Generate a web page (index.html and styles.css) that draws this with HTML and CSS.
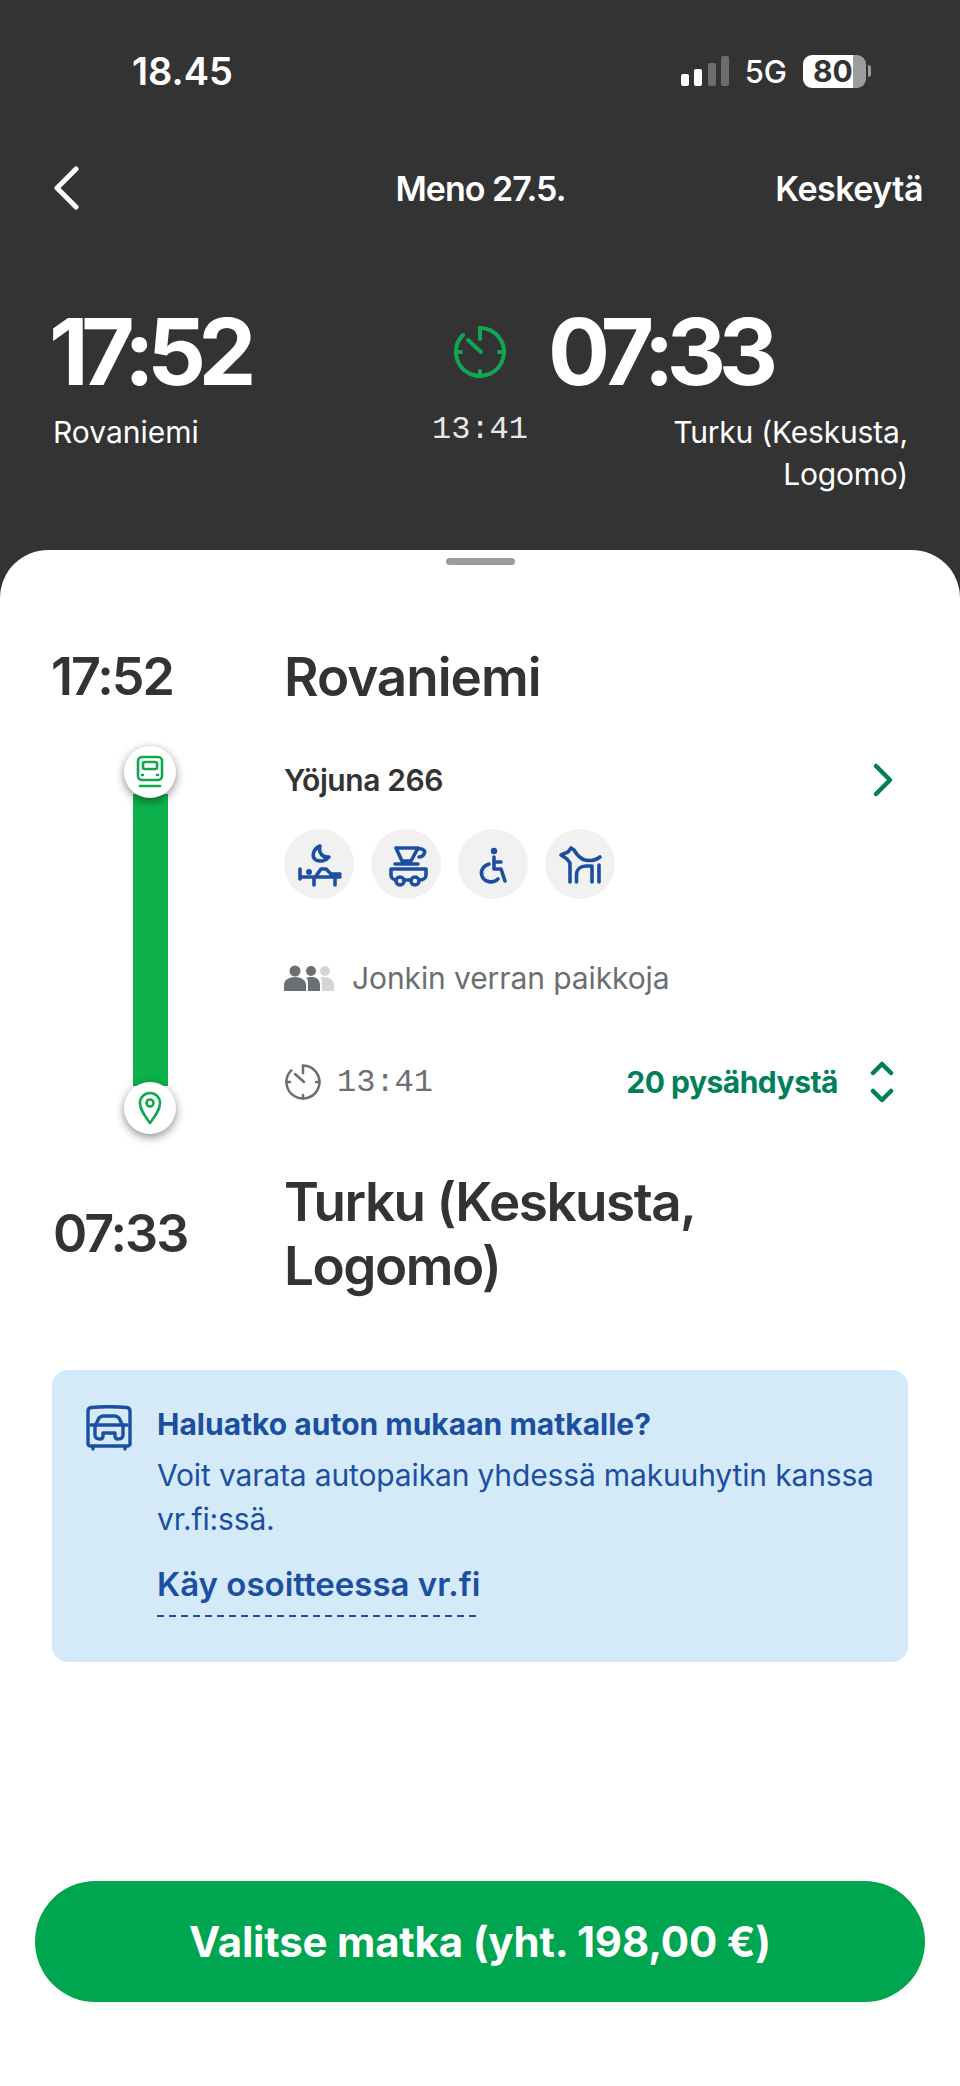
FILE: index.html
```html
<!DOCTYPE html>
<html>

	<head>
		<meta charset="UTF-8">
		<title>Meno 27.5.</title>
		<link rel="stylesheet" href="styles.css">
	</head>

	<body>
		<div id="top">
			<!--status bar-->
			<div class="status">
				<span class="clock">18.45</span>
				<div class="status-right">
					<svg class="signal" width="48" height="30" viewBox="0 0 48 30">
						<rect x="0" y="18" width="8" height="12" rx="2" fill="#fff" />
						<rect x="13" y="13" width="8" height="17" rx="2" fill="#fff" />
						<rect x="27" y="7" width="8" height="23" rx="2" fill="#6d6d6d" />
						<rect x="40" y="0" width="8" height="30" rx="2" fill="#6d6d6d" />
					</svg>
					<span class="net">5G</span>
					<div class="battery"><span>80</span></div>
					<div class="battery-tip"></div>
				</div>
			</div>
			<!--nav-->
			<div class="nav">
				<svg width="26" height="44" viewBox="0 0 26 44" fill="none" stroke="#fff" stroke-width="5" stroke-linecap="round" stroke-linejoin="round">
					<path d="M23 3L4 22l19 19" />
				</svg>
				<span class="nav-title">Meno 27.5.</span>
				<span class="nav-cancel">Keskeytä</span>
			</div>
			<!--summary-->
			<div class="summary">
				<div class="sum-col">
					<div class="big-time">17:52</div>
					<div class="sum-place">Rovaniemi</div>
				</div>
				<div class="sum-mid">
					<svg width="56" height="56" viewBox="0 0 56 56" fill="none" stroke="#10a84f" stroke-width="4" stroke-linecap="round">
						<path d="M28 15V4a24 24 0 1 1-17 7" />
						<path d="M16 16l13 12" />
						<path d="M4 28h5M47 28h5M28 47v5" />
					</svg>
					<div class="dur">13:41</div>
				</div>
				<div class="sum-col sum-end">
					<div class="big-time">07:33</div>
					<div class="sum-place">Turku (Keskusta,<br>Logomo)</div>
				</div>
			</div>
		</div>

		<div id="sheet">
			<div class="handle"></div>
			<div class="leg">
				<div class="time">17:52</div>
				<div class="place">Rovaniemi</div>

				<div class="rail">
					<div class="dot dot-top">
						<svg width="30" height="34" viewBox="0 0 30 34" fill="none" stroke="#10a84f" stroke-width="2.6" stroke-linecap="round" stroke-linejoin="round">
							<rect x="3" y="2" width="24" height="23" rx="4" />
							<rect x="8" y="7" width="14" height="7" rx="1.5" />
							<path d="M7 20h1M22 20h1M5 31h20" />
						</svg>
					</div>
					<div class="bar"></div>
					<div class="dot dot-bottom">
						<svg width="26" height="34" viewBox="0 0 26 34" fill="none" stroke="#10a84f" stroke-width="2.6" stroke-linejoin="round">
							<path d="M13 32C8 25 3 19 3 12a10 10 0 0 1 20 0C23 19 18 25 13 32z" />
							<circle cx="13" cy="12" r="3.5" />
						</svg>
					</div>
				</div>

				<div class="info">
					<div class="train-row">
						<span class="train">Yöjuna 266</span>
						<svg width="22" height="36" viewBox="0 0 22 36" fill="none" stroke="#00805a" stroke-width="4.5" stroke-linecap="round" stroke-linejoin="round">
							<path d="M4 4l14 14L4 32" />
						</svg>
					</div>
					<div class="services">
						<div class="service">
							<svg width="46" height="46" viewBox="0 0 46 46" fill="none" stroke="#1c4fa1" stroke-width="3.6" stroke-linecap="round" stroke-linejoin="round">
								<path d="M24 5C17 8 15 16 20 19C24 21 30 20 33 16C27 17 22 12 24 5z" />
								<path d="M4 28V38M4 36H44M18 36V44M39 36V44M20 35L25 28H30L35 33H44" />
								<circle cx="13" cy="31" r="3" fill="#1c4fa1" stroke="none" />
							</svg>
						</div>
						<div class="service">
							<svg width="46" height="46" viewBox="0 0 46 46" fill="none" stroke="#1c4fa1" stroke-width="3.6" stroke-linecap="round" stroke-linejoin="round">
								<path d="M13 7H35L28 20H19zM35 8C40 7 43 10 41 13 40 15 38 16 36 16M12 23H35" />
								<path d="M8 28H43V34C43 37 40 39 37 39H14C11 39 8 37 8 34z" />
								<circle cx="17" cy="40" r="4" fill="#f1f1f2" />
								<circle cx="32" cy="40" r="4" fill="#f1f1f2" />
							</svg>
						</div>
						<div class="service">
							<svg width="46" height="46" viewBox="0 0 46 46" fill="none" stroke="#1c4fa1" stroke-width="3.6" stroke-linecap="round" stroke-linejoin="round">
								<circle cx="24" cy="10" r="3.2" fill="#1c4fa1" stroke="none" />
								<path d="M24 16V28H31L35 40M24 21H31" />
								<path d="M19 23C13 25 10 30 12 35C14 41 23 43 28 38" />
							</svg>
						</div>
						<div class="service">
							<svg width="46" height="46" viewBox="0 0 46 46" fill="none" stroke="#1c4fa1" stroke-width="3.6" stroke-linecap="round" stroke-linejoin="round">
								<path d="M43 16C38 20 33 20 28 19C24 18 20 14 17 9L14 7L11 11L4 14L10 18L13 22V41" />
								<path d="M19.5 41V34C19.5 28 24 25 29 25H35V41M42 24V41" />
							</svg>
						</div>
					</div>
					<div class="seats">
						<svg width="50" height="26" viewBox="0 0 50 26">
							<circle cx="11" cy="6" r="5.5" fill="#6b6e72" />
							<path d="M0 26v-6c0-5 5-8 11-8s11 3 11 8v6z" fill="#6b6e72" />
							<circle cx="27" cy="6" r="5" fill="#6b6e72" />
							<path d="M24 26v-8c0-2 0-4-2-5 2-1 4-1 6-1 5 0 8 3 8 8v6z" fill="#6b6e72" />
							<circle cx="41" cy="6" r="5" fill="#d4d5d6" />
							<path d="M38 26v-8c0-2 0-4-2-5 6-3 14 1 14 7v6z" fill="#d4d5d6" />
						</svg>
						<span>Jonkin verran paikkoja</span>
					</div>
					<div class="dur-row">
						<svg width="38" height="38" viewBox="0 0 38 38" fill="none" stroke="#6b6e72" stroke-width="2.5" stroke-linecap="round">
							<path d="M19 10V2.500a16.500 16.500 0 1 1-11.700 4.800" />
							<path d="M11 11l9 8" />
							<path d="M2.500 19h3.500M32 19h3.500M19 32v3.500" />
						</svg>
						<span class="dur-text">13:41</span>
						<span class="stops">20 pysähdystä</span>
						<svg width="24" height="42" viewBox="0 0 24 42" fill="none" stroke="#00805a" stroke-width="4.5" stroke-linecap="round" stroke-linejoin="round">
							<path d="M3 12l9-9 9 9M3 30l9 9 9-9" />
						</svg>
					</div>
				</div>

				<div class="time time-end">07:33</div>
				<div class="place place-end">Turku (Keskusta,<br>Logomo)</div>
			</div>

			<!--info box-->
			<div class="notice">
				<svg class="notice-icon" width="46" height="46" viewBox="0 0 46 46" fill="none" stroke="#1c4fa1" stroke-width="3.4" stroke-linecap="round" stroke-linejoin="round">
					<path d="M2 6c0-2 1-3 3-3.500 11-1 25-1 36 0 2 .5 3 1.500 3 3.500v33c0 1-1 2-2 2H4c-1 0-2-1-2-2zM7 42v2M39 42v2" />
					<path d="M9 21l4-8c1-1 2-2 4-2h12c2 0 3 1 4 2l4 8M5 20h36" />
					<path d="M9 21v9c0 3 2 4 5 4 2 0 3-1 3-3v-3h12v3c0 2 1 3 3 3 3 0 5-1 5-4v-9" />
				</svg>
				<div class="notice-text">
					<div class="notice-title">Haluatko auton mukaan matkalle?</div>
					<div class="notice-body">Voit varata autopaikan yhdessä makuuhytin kanssa vr.fi:ssä.</div>
					<div class="notice-link">Käy osoitteessa vr.fi</div>
				</div>
			</div>

			<div class="btn">Valitse matka (yht. 198,00 €)</div>
		</div>
	</body>

</html>
```

FILE: styles.css
```css
* {
	margin: 0;
	padding: 0;
	box-sizing: border-box;
}

html,
body {
	width: 960px;
	height: 2086px;
	overflow: hidden;
}

body {
	background-color: #333333;
	font-family: Inter, "Liberation Sans", sans-serif;
	color: #333333;
}

#top {
	height: 550px;
	color: #fff;
	padding: 0 38px 0 52px;
}

.status {
	height: 142px;
	padding: 50px 51px 0 80px;
	display: flex;
	justify-content: space-between;
	align-items: flex-start;
}

.clock {
	font-size: 38px;
	font-weight: 600;
	line-height: 42px;
}

.status-right {
	display: flex;
	align-items: center;
	height: 42px;
}

.signal {
	margin-right: 16px;
}

.net {
	font-size: 31px;
	font-weight: 500;
	margin-right: 16px;
}

.battery {
	width: 63px;
	height: 33px;
	border-radius: 9px;
	background: linear-gradient(to right, #fff 50px, #9c9c9c 50px);
	color: #333;
	font-size: 30px;
	font-weight: 700;
	line-height: 33px;
	padding-left: 10px;
}

.battery-tip {
	width: 3px;
	height: 12px;
	margin-left: 2px;
	border-radius: 0 3px 3px 0;
	background-color: #9c9c9c;
}

.nav {
	display: grid;
	grid-template-columns: 1fr auto 1fr;
	align-items: center;
	height: 92px;
	margin-left: 1px;
	margin-right: 14px;
}

.nav-title,
.nav-cancel {
	font-size: 34px;
	font-weight: 600;
	letter-spacing: -1px;
}

.nav-cancel {
	justify-self: end;
	margin-right: -15px;
	letter-spacing: -0.5px;
}

.summary {
	display: flex;
	margin-top: 68px;
}

.sum-col {
	width: 368px;
}

.big-time {
	font-size: 92px;
	font-weight: 700;
	line-height: 100px;
	letter-spacing: -7.500px;
	margin-left: -3px;
}

.sum-place {
	font-size: 30px;
	line-height: 42px;
	margin-top: 9px;
	margin-left: 1px;
}

.sum-mid {
	width: 120px;
	text-align: center;
	padding-top: 22px;
}

.dur {
	font-family: "Liberation Mono", monospace;
	font-size: 32px;
	line-height: 36px;
	margin-top: 28px;
	color: #e8e8e8;
}

.sum-end {
	width: 359px;
	margin-left: 8px;
}

.sum-end .big-time {
	margin-left: 0;
}

.sum-end .sum-place {
	text-align: right;
	margin: 9px -1px 0 0;
	letter-spacing: -0.2px;
}

#sheet {
	height: 1536px;
	background-color: #fff;
	border-radius: 48px 48px 0 0;
	padding: 8px 52px 0;
}

.handle {
	width: 69px;
	height: 7px;
	border-radius: 4px;
	background-color: #9a9ca0;
	margin: 0 auto;
}

.leg {
	display: grid;
	grid-template-columns: 232px 1fr;
	margin-top: 80px;
}

.time,
.place {
	font-size: 52px;
	font-weight: 600;
	line-height: 64px;
	letter-spacing: -1px;
}

.time {
	letter-spacing: -2px;
	margin-left: -1px;
}

.place {
	font-size: 53px;
}

.rail {
	display: flex;
	flex-direction: column;
	align-items: center;
	width: 196px;
	margin-top: 37px;
	margin-bottom: -30px;
}

.dot {
	width: 52px;
	height: 52px;
	flex: none;
	border-radius: 50%;
	background-color: #fff;
	box-shadow: 0 3px 10px rgba(0, 0, 0, 0.45);
	display: flex;
	align-items: center;
	justify-content: center;
	position: relative;
}

.bar {
	width: 35px;
	flex: 1;
	background-color: #0db14b;
	margin: -4px 0;
}

.info {
	padding-top: 53px;
}

.train-row {
	display: flex;
	justify-content: space-between;
	align-items: center;
	height: 36px;
	padding-right: 14px;
}

.train {
	font-size: 30px;
	font-weight: 600;
	letter-spacing: -0.4px;
}

.services {
	display: flex;
	gap: 17px;
	margin-top: 31px;
}

.service {
	width: 70px;
	height: 70px;
	border-radius: 50%;
	background-color: #f1f1f2;
	display: flex;
	align-items: center;
	justify-content: center;
}

.seats {
	display: flex;
	align-items: center;
	gap: 18px;
	height: 40px;
	margin-top: 59px;
	font-size: 30px;
	letter-spacing: -0.1px;
	color: #6b6e72;
}

.dur-row {
	display: flex;
	align-items: center;
	height: 44px;
	margin-top: 62px;
	padding-right: 14px;
}

.dur-text {
	font-family: "Liberation Mono", monospace;
	font-size: 32px;
	color: #6b6e72;
	margin-left: 15px;
}

.stops {
	font-size: 30px;
	font-weight: 700;
	letter-spacing: -0.5px;
	color: #00805a;
	margin-left: auto;
	margin-right: 32px;
}

.time-end {
	margin-left: 1px;
	margin-top: 66px;
	align-self: center;
}

.place-end {
	margin-top: 66px;
	letter-spacing: -1.500px;
}

.notice {
	display: flex;
	gap: 26px;
	height: 292px;
	margin-top: 72px;
	padding: 32px 16px 0 34px;
	border-radius: 16px;
	background-color: #d5eaf8;
	color: #1c4fa1;
}

.notice-icon {
	flex: none;
	margin-top: 3px;
}

.notice-text {
	margin-left: -1px;
}

.notice-title {
	font-size: 30px;
	font-weight: 700;
	line-height: 44px;
}

.notice-body {
	font-size: 30px;
	line-height: 44px;
	margin-top: 7px;
	letter-spacing: -0.15px;
}

.notice-link {
	display: inline-block;
	font-size: 33px;
	font-weight: 600;
	line-height: 46px;
	margin-top: 20px;
	padding-bottom: 10px;
	background: repeating-linear-gradient(to right, #1c4fa1 0, #1c4fa1 7px, transparent 7px, transparent 12px) left bottom / 100% 2px no-repeat;
}

.btn {
	height: 121px;
	margin: 219px -17px 0;
	border-radius: 61px;
	background-color: #00a550;
	color: #fff;
	font-size: 42px;
	font-weight: 700;
	letter-spacing: -0.2px;
	line-height: 121px;
	text-align: center;
}
```
